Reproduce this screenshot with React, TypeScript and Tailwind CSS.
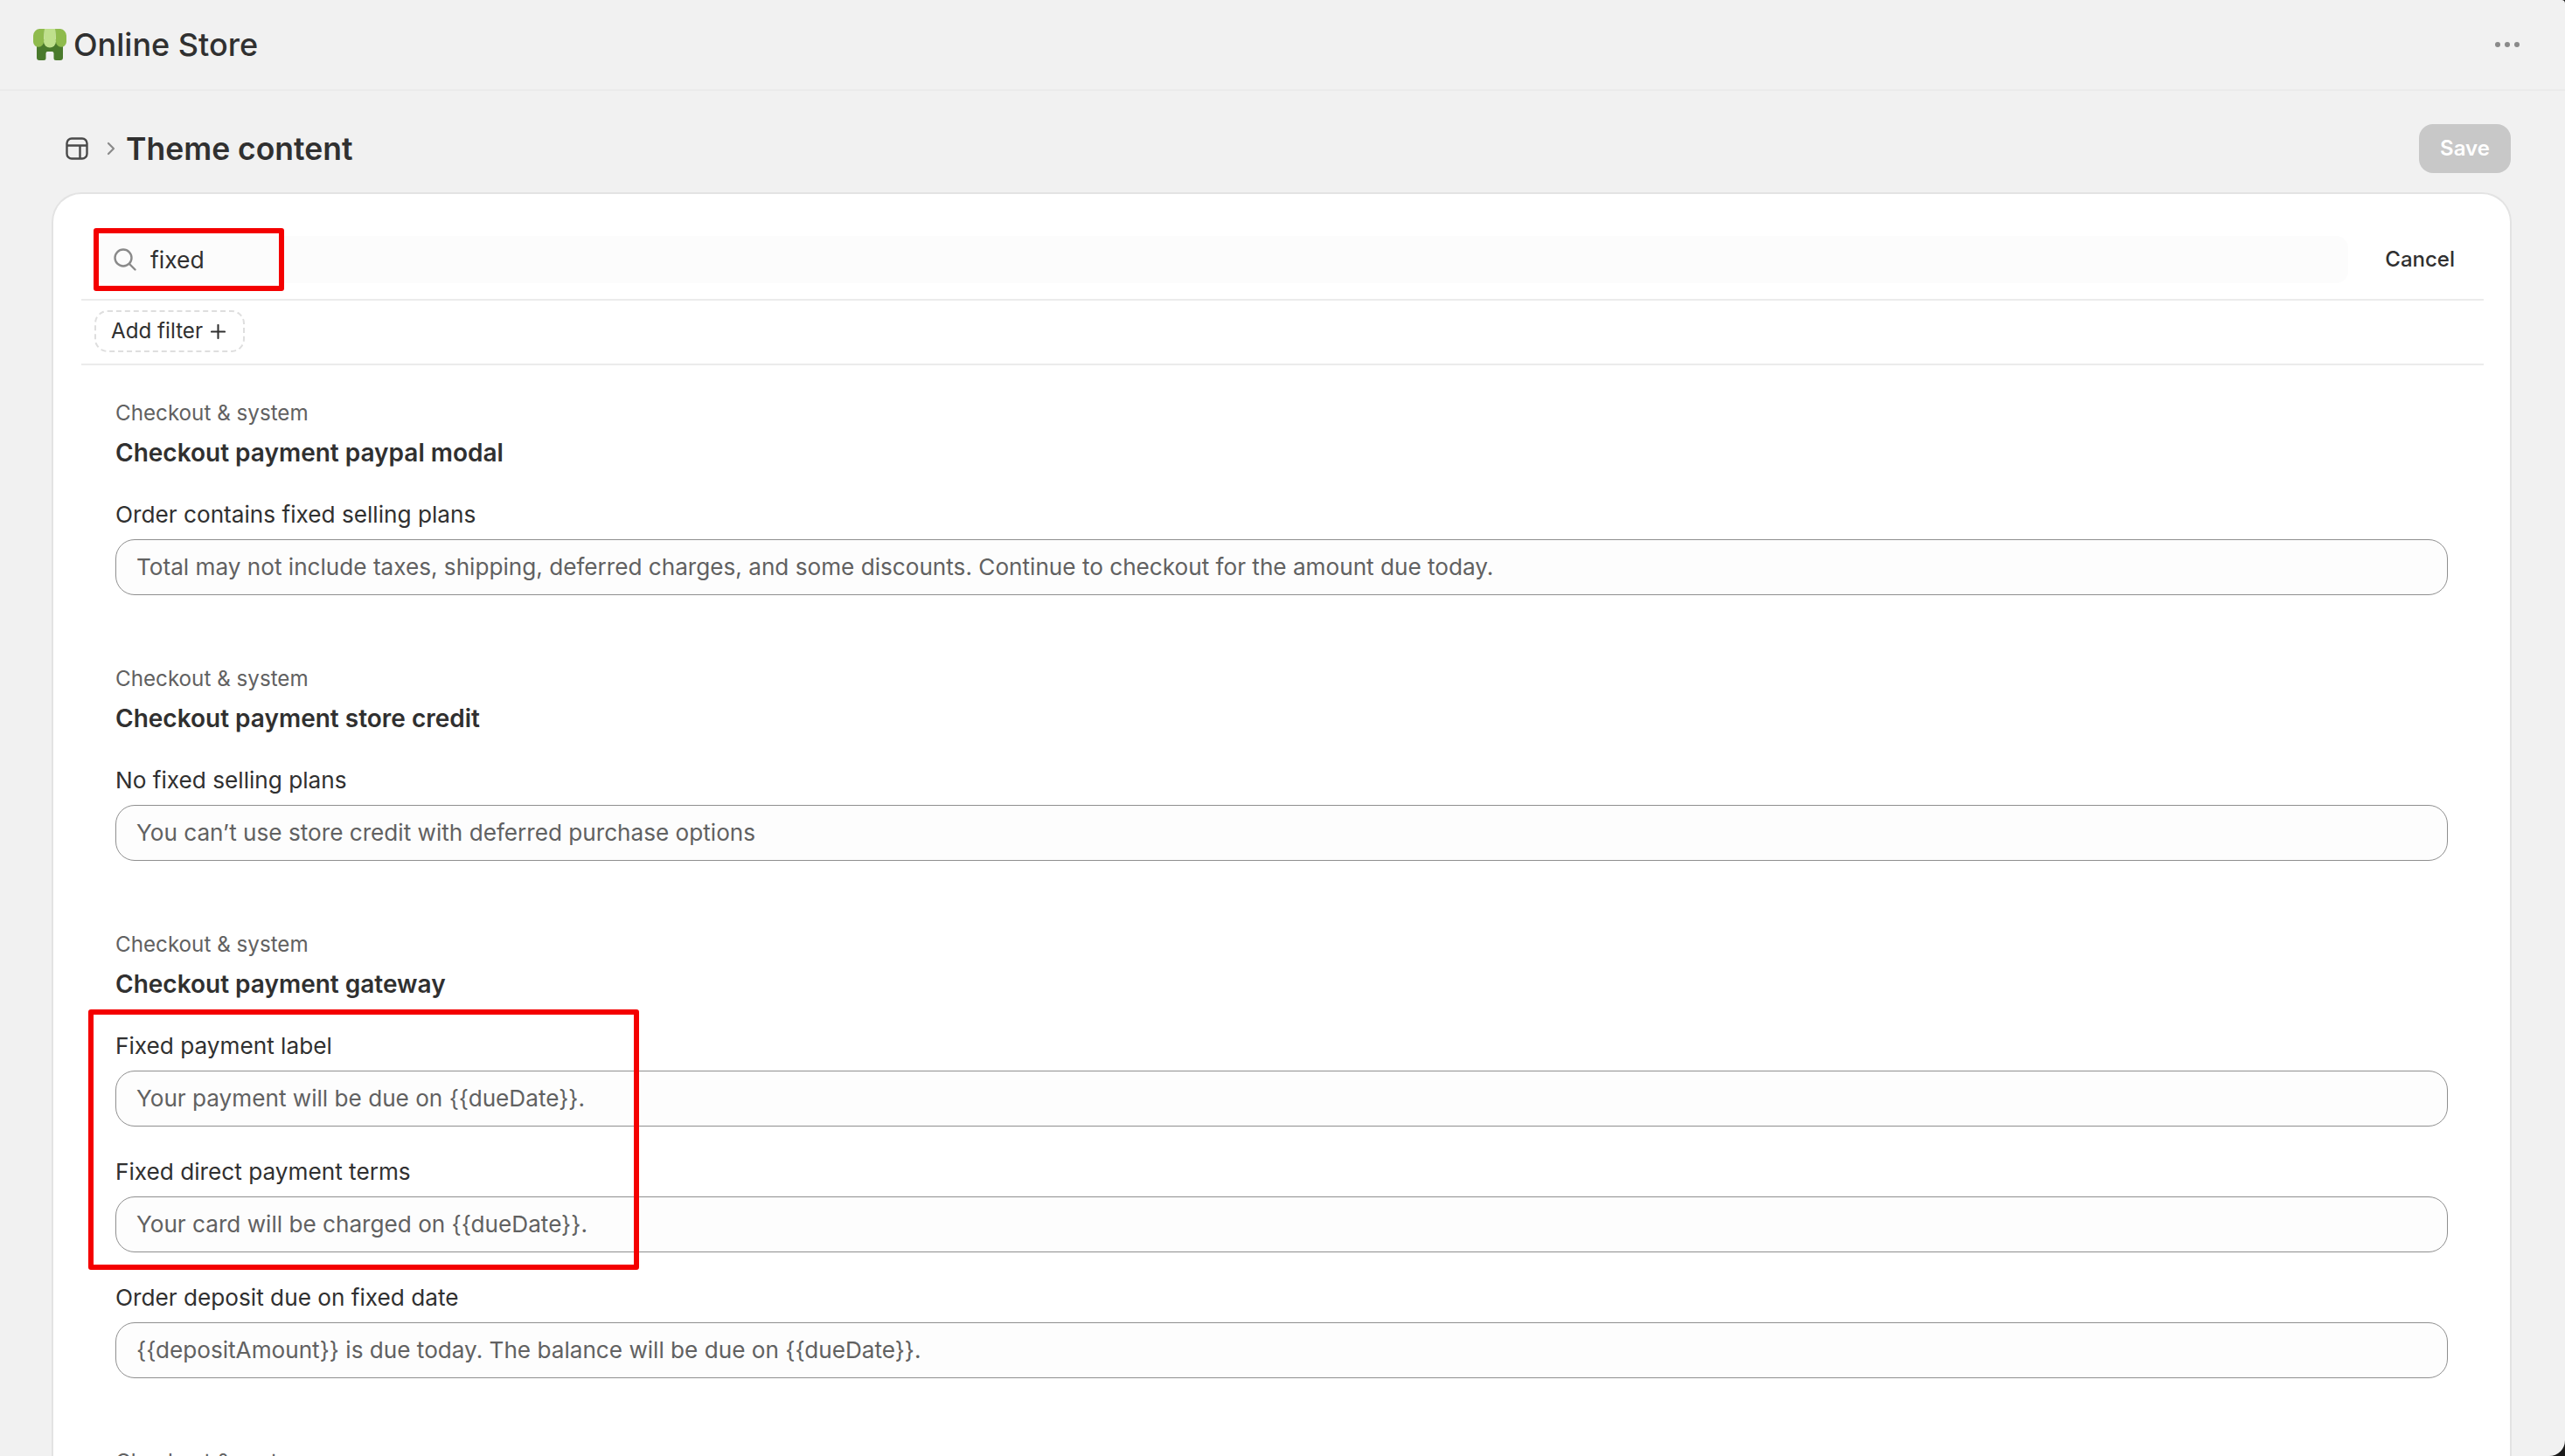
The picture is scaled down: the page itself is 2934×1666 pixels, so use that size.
const font = { fontFamily: "Inter, 'Liberation Sans', sans-serif" }

type Field = { label: string; value: string }
type Section = { title?: string; fields: Field[] }

const sections: Section[] = [
  {
    title: "Checkout payment paypal modal",
    fields: [
      {
        label: "Order contains fixed selling plans",
        value: "Total may not include taxes, shipping, deferred charges, and some discounts. Continue to checkout for the amount due today.",
      },
    ],
  },
  {
    title: "Checkout payment store credit",
    fields: [
      { label: "No fixed selling plans", value: "You can’t use store credit with deferred purchase options" },
    ],
  },
  {
    title: "Checkout payment gateway",
    fields: [
      { label: "Fixed payment label", value: "Your payment will be due on {{dueDate}}." },
      { label: "Fixed direct payment terms", value: "Your card will be charged on {{dueDate}}." },
      { label: "Order deposit due on fixed date", value: "{{depositAmount}} is due today. The balance will be due on {{dueDate}}." },
    ],
  },
  // next section is cut off by the bottom of the screen
  { fields: [] },
]

function StoreLogo() {
  return (
    <svg width="38" height="36" viewBox="0 0 38 36">
      {/* body with door */}
      <path
        d="M4 12h30v21a3 3 0 0 1-3 3h-5a2.500 2.500 0 0 1-2.500-2.500V28a2 2 0 0 0-2-2h-5a2 2 0 0 0-2 2v5.500A2.500 2.500 0 0 1 12 36H7a3 3 0 0 1-3-3z"
        fill="#4a7a2c"
      />
      {/* awning */}
      <path d="M7 0h6l-1 14.500a6 6 0 0 1-12 .500V8a8 8 0 0 1 7-8z" fill="#8fbb4d" />
      <path d="M31 0h-6l1 14.500a6 6 0 0 0 12 .500V8a8 8 0 0 0-7-8z" fill="#8fbb4d" />
      <path d="M13 0h12l1 14.500a7 7 0 0 1-14 0z" fill="#bfe08c" />
    </svg>
  )
}

function ThemeIcon() {
  return (
    <svg width="26" height="26" viewBox="0 0 26 26" fill="none" stroke="#4a4a4a" strokeWidth="2.400">
      <rect x="1.500" y="1.500" width="23" height="23" rx="5.500" />
      <path d="M1.500 9.500h23M16.500 9.500v15" />
    </svg>
  )
}

function Chevron() {
  return (
    <svg width="10" height="16" viewBox="0 0 10 16" fill="none" stroke="#8a8a8a" strokeWidth="2.200" strokeLinecap="round" strokeLinejoin="round">
      <path d="M2 2l6 6-6 6" />
    </svg>
  )
}

function SearchIcon() {
  return (
    <svg width="26" height="26" viewBox="0 0 26 26" fill="none" stroke="#8a8a8a" strokeWidth="2.400" strokeLinecap="round">
      <circle cx="11" cy="11" r="9.500" />
      <path d="M18 18l6.500 6.500" />
    </svg>
  )
}

function FieldRow({ field }: { field: Field }) {
  return (
    <div className="flex flex-col">
      <div className="h-[36px] flex items-center text-[26.2px] leading-none text-[#303030]">{field.label}</div>
      <div className="mt-[10px] h-[64px] flex items-center rounded-[22px] border-[1.5px] border-[#8f8f8f] bg-[#fdfdfd] pl-[23px] text-[26.15px] leading-none text-[#616161]">
        {field.value}
      </div>
    </div>
  )
}

function SectionBlock({ section }: { section: Section }) {
  return (
    <div className="flex flex-col mb-[81px]">
      <div className="h-[30px] flex items-center text-[24.2px] leading-none text-[#616161]">Checkout &amp; system</div>
      {section.title && (
        <>
          <div className="mt-[15px] h-[30px] flex items-center text-[28px] leading-none font-semibold text-[#303030]">{section.title}</div>
          <div className="mt-[38px] flex flex-col gap-[34px]">
            {section.fields.map((f) => (
              <FieldRow key={f.label} field={f} />
            ))}
          </div>
        </>
      )}
    </div>
  )
}

export default function App() {
  return (
    <div className="w-[2934px] h-[1666px] overflow-hidden bg-[#1a1a1a]" style={font}>
      <div className="w-full h-full overflow-hidden rounded-br-[18px] rounded-tr-[4px] bg-[#f1f1f1] relative">
        {/* top bar */}
        <header className="h-[104px] border-b-2 border-[#ebebeb] flex items-center justify-between pl-[38px] pr-[52px]">
          <div className="flex items-center gap-[8px]">
            <StoreLogo />
            <span className="text-[36px] leading-none font-medium text-[#303030]">Online Store</span>
          </div>
          <div className="flex gap-[5px]">
            <span className="w-[6px] h-[6px] rounded-full bg-[#8a8a8a]" />
            <span className="w-[6px] h-[6px] rounded-full bg-[#8a8a8a]" />
            <span className="w-[6px] h-[6px] rounded-full bg-[#8a8a8a]" />
          </div>
        </header>

        {/* page title */}
        <div className="h-[116px] flex items-center justify-between pl-[75px] pr-[62px] pt-[16px]">
          <div className="flex items-center">
            <ThemeIcon />
            <span className="ml-[21px] mr-[12px]"><Chevron /></span>
            <h1 className="text-[35.5px] leading-none font-semibold text-[#303030] mt-[2px]">Theme content</h1>
          </div>
          <button className="w-[105px] h-[56px] rounded-[16px] bg-[#c8c8c8] text-[24px] font-semibold text-white">Save</button>
        </div>

        {/* card */}
        <div className="ml-[59px] w-[2814px] h-[1500px] rounded-t-[34px] border-2 border-b-0 border-[#e3e3e3] bg-white relative">
          <div className="ml-[32px] mr-[30px] h-[122px] border-b-2 border-[#ebebeb] flex items-center pl-[14px] pr-[33px] pt-[30px]">
            <div className="flex-1 h-[54px] mr-[42px] flex items-center rounded-[14px] bg-[#fcfcfc] pl-[23px]">
              <SearchIcon />
              <span className="ml-[16px] text-[26.5px] leading-none text-[#303030]">fixed</span>
            </div>
            <span className="text-[24px] font-medium leading-none text-[#303030]">Cancel</span>
          </div>
          <div className="ml-[32px] mr-[30px] h-[74px] border-b-2 border-[#ebebeb] flex items-center pl-[15px] pb-[2px]">
            <div className="w-[172px] h-[48px] flex items-center pl-[17px] gap-[9px] rounded-[15px] border-2 border-dashed border-[#dedede] text-[24.2px] leading-none text-[#303030]">
              Add filter
              <svg width="17" height="17" viewBox="0 0 18 18" stroke="#303030" strokeWidth="2.200" strokeLinecap="round">
                <path d="M9 1v16M1 9h16" />
              </svg>
            </div>
          </div>

          <div className="pt-[40px] pl-[71px] pr-[71px]">
            {sections.map((s, i) => (
              <SectionBlock key={i} section={s} />
            ))}
          </div>

          {/* red annotation boxes */}
          <div className="absolute left-[46px] top-[39px] w-[218px] h-[72px] rounded-[3px] border-[6px] border-[#f40000]" />
          <div className="absolute left-[40px] top-[933px] w-[630px] h-[298px] rounded-[3px] border-[6px] border-[#f40000]" />
        </div>
      </div>
    </div>
  )
}
